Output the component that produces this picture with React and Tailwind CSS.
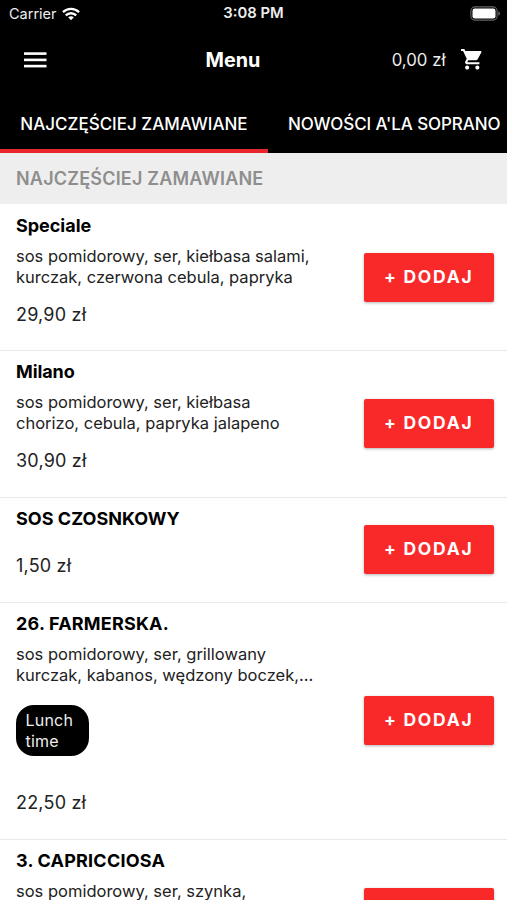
import React from "react";

const items = [
  { name: "Speciale", spacing: "tracking-[-0.02px]", lines: ["sos pomidorowy, ser, kiełbasa salami,", "kurczak, czerwona cebula, papryka"], price: "29,90 zł", height: "h-[146px]" },
  { name: "Milano", spacing: "tracking-[-0.1px]", lines: ["sos pomidorowy, ser, kiełbasa", "chorizo, cebula, papryka jalapeno"], price: "30,90 zł", height: "h-[147px]" },
  { name: "SOS CZOSNKOWY", spacing: "tracking-[0.03px]", lines: [], price: "1,50 zł", height: "h-[105px]" },
  { name: "26. FARMERSKA.", spacing: "tracking-[0.2px]", lines: ["sos pomidorowy, ser, grillowany", "kurczak, kabanos, wędzony boczek,..."], tag: "Lunch time", price: "22,50 zł", height: "h-[237px]" },
  { name: "3. CAPRICCIOSA", spacing: "tracking-[0.2px]", lines: ["sos pomidorowy, ser, szynka,"], price: "", height: "h-[147px]" },
];

function WifiIcon() {
  return (
    <svg className="ml-[5px] h-[14px] w-[18px]" viewBox="0 0 19 14" fill="none" stroke="white" strokeWidth="2.5">
      <path d="M1 5.1C5.8.5 13.2.5 18 5.1" />
      <path d="M4 8.5C7.1 5.4 11.9 5.4 15 8.5" />
      <path d="M9.5 13.6 6.5 10.5C8.2 9 10.8 9 12.5 10.5Z" fill="white" stroke="none" />
    </svg>
  );
}

function BatteryIcon() {
  return (
    <svg className="h-[15px] w-[31px]" viewBox="0 0 31 15">
      <rect x=".9" y=".9" width="26.2" height="13.2" rx="4" fill="none" stroke="#666" strokeWidth="1.1" />
      <rect x="2.5" y="2.5" width="23" height="10" rx="2.3" fill="white" />
      <path d="M28.4 5.3c2 .8 2 3.6 0 4.4Z" fill="#777" />
    </svg>
  );
}

function MenuIcon() {
  return (
    <svg className="h-4 w-[23px]" viewBox="0 0 23 16" fill="white">
      <rect y=".3" width="22.500" height="2.600" />
      <rect y="6.600" width="22.500" height="2.600" />
      <rect y="12.800" width="22.500" height="2.600" />
    </svg>
  );
}

function CartIcon() {
  return (
    <svg className="mb-[3px] h-[24.5px] w-[24.5px]" viewBox="0 0 24 24" fill="white">
      <path d="M7 18c-1.100 0-1.990.9-1.990 2S5.900 22 7 22s2-.9 2-2-.9-2-2-2zM1 2v2h2l3.600 7.590-1.350 2.450c-.16.280-.25.610-.25.960 0 1.100.9 2 2 2h12v-2H7.420c-.14 0-.25-.11-.25-.25l.03-.12.900-1.630h7.450c.75 0 1.410-.41 1.750-1.030l3.580-6.490c.08-.14.120-.31.120-.48 0-.55-.45-1-1-1H5.210l-.94-2H1zm16 16c-1.100 0-1.990.9-1.990 2s.89 2 1.990 2 2-.9 2-2-.9-2-2-2z" />
    </svg>
  );
}

function MenuRow({ item }) {
  return (
    <li className={`flex shrink-0 items-center justify-between border-b border-[#e9e9e9] pl-4 pr-[13.5px] ${item.height}`}>
      <div className="flex flex-col self-stretch pt-[10px] whitespace-nowrap">
        <h2 className={`text-[18px] leading-[22px] font-bold text-black ${item.spacing}`}>{item.name}</h2>
        <div className="mt-[9px] mb-[16px] text-[16.5px] leading-[21px] text-[#222]">
          {item.lines.map((line) => <p key={line}>{line}</p>)}
        </div>
        {item.tag && (
          <span className="mt-[3px] mb-[36px] w-[73px] rounded-[18px] bg-black px-[9.5px] py-[4.5px] text-[16px] leading-[21px] tracking-[0.2px] whitespace-normal text-[#eee]">{item.tag}</span>
        )}
        {item.price && <p className="text-[18px] leading-[22px] tracking-[0.2px] text-[#222]">{item.price}</p>}
      </div>
      <button className="mb-[1px] h-[49px] w-[129.5px] rounded-[2px] bg-[#fa2929] text-[17.5px] font-bold tracking-[1.75px] text-white shadow-[0_1px_3px_rgba(0,0,0,0.3)]">+ DODAJ</button>
    </li>
  );
}

export default function App() {
  return (
    <div className="flex h-[900px] w-[507px] flex-col overflow-hidden bg-white font-['Inter','Liberation_Sans',sans-serif]">
      <header className="flex h-[153px] shrink-0 flex-col bg-black text-white">
        <div className="grid h-[27px] grid-cols-3 items-center pl-[9px] pr-[6px] whitespace-nowrap text-[#eee]">
          <div className="flex items-center text-[14.5px]">Carrier<WifiIcon /></div>
          <div className="pr-[3px] text-center text-[14.8px] font-semibold">3:08 PM</div>
          <div className="flex justify-end"><BatteryIcon /></div>
        </div>
        <div className="grid h-[66px] grid-cols-[187px_46px_1fr] items-center justify-items-center px-[23px]">
          <button aria-label="Menu" className="flex justify-self-start pl-px"><MenuIcon /></button>
          <h1 className="flex justify-center pt-px text-[19.800px] font-bold">Menu</h1>
          <div className="flex items-center gap-[14px] justify-self-end pt-px text-[16.8px] text-[#eee]">0,00 zł<CartIcon /></div>
        </div>
        <nav className="flex h-[60px] text-[17px] font-medium whitespace-nowrap">
          <a className="flex w-[268px] shrink-0 items-center justify-center border-b-4 border-[#e8262b] pt-[7px]">NAJCZĘŚCIEJ ZAMAWIANE</a>
          <a className="flex items-center pt-[7px] pb-1 pl-[20px] tracking-[-0.1px]">NOWOŚCI A'LA SOPRANO</a>
        </nav>
      </header>
      <div className="flex h-[51px] shrink-0 items-center bg-[#eee] pl-4 text-[18px] font-semibold tracking-[0.2px] text-[#8e8e8e]">NAJCZĘŚCIEJ ZAMAWIANE</div>
      <ul className="mt-px flex flex-col">
        {items.map((item) => <MenuRow key={item.name} item={item} />)}
      </ul>
    </div>
  );
}
